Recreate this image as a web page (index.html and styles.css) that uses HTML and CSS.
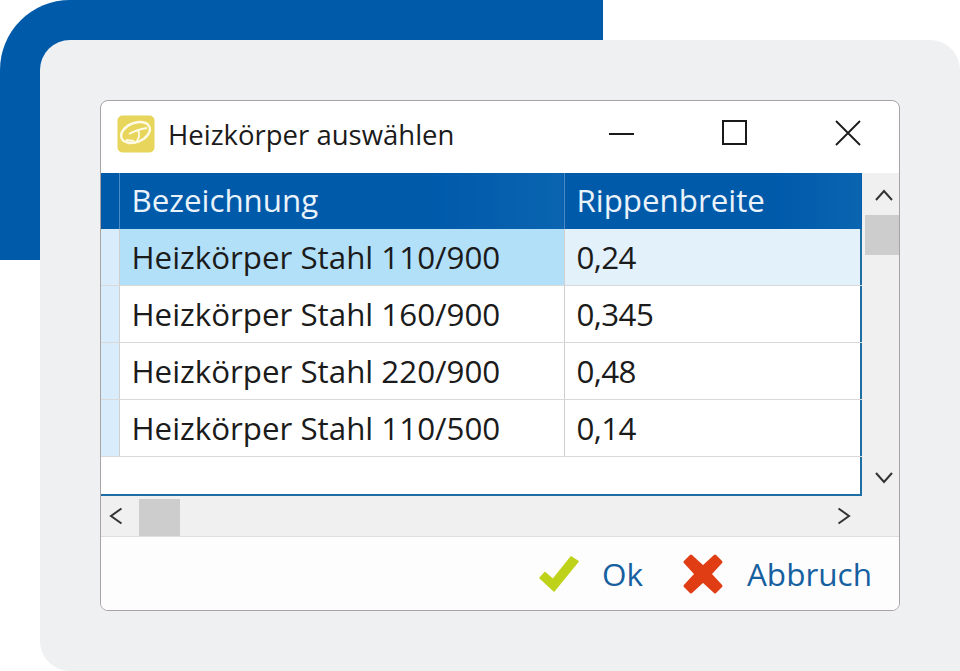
FILE: index.html
```html
<!DOCTYPE html>
<html lang="de">
<head>
<meta charset="utf-8">
<title>Heizkörper auswählen</title>
<link rel="stylesheet" href="styles.css">
</head>
<body>
<div class="stage">
  <div class="accent"></div>
  <div class="panel">
    <div class="window">
      <header class="titlebar">
        <svg class="app-icon" viewBox="0 0 38 38" width="38" height="38">
          <rect x="0.5" y="0.5" width="37" height="37" rx="5" fill="#e8d65c"/>
          <ellipse cx="18.500" cy="17.500" rx="15" ry="9.500" transform="rotate(-22 18.500 17.500)" fill="none" stroke="#fffbe6" stroke-width="2.400"/>
          <path d="M12 19c5-3 12-5 18-6M21 15c2 4 1 9-3 13M9 25l8 1" fill="none" stroke="#fffbe6" stroke-width="1.800"/>
        </svg>
        <span class="title">Heizkörper auswählen</span>
        <div class="controls">
          <svg class="ctl" viewBox="0 0 26 26" width="26" height="26"><path d="M0 14H25" stroke="#1a1a1a" stroke-width="2" fill="none"/></svg>
          <svg class="ctl" viewBox="0 0 26 26" width="26" height="26"><rect x="1" y="1" width="23" height="23" stroke="#1a1a1a" stroke-width="2" fill="none"/></svg>
          <svg class="ctl" viewBox="0 0 26 26" width="26" height="26"><path d="M1 1L25 25M25 1L1 25" stroke="#1a1a1a" stroke-width="1.800" fill="none"/></svg>
        </div>
      </header>
      <div class="grid-area">
        <div class="table-box">
          <table class="table">
            <colgroup><col class="c0"><col class="c1"><col class="c2"></colgroup>
            <thead>
              <tr><th></th><th>Bezeichnung</th><th>Rippenbreite</th></tr>
            </thead>
            <tbody>
              <tr class="selected"><td class="rh"></td><td class="name">Heizkörper Stahl 110/900</td><td class="val">0,24</td></tr>
              <tr><td class="rh"></td><td class="name">Heizkörper Stahl 160/900</td><td class="val">0,345</td></tr>
              <tr><td class="rh"></td><td class="name">Heizkörper Stahl 220/900</td><td class="val">0,48</td></tr>
              <tr><td class="rh"></td><td class="name">Heizkörper Stahl 110/500</td><td class="val">0,14</td></tr>
            </tbody>
          </table>
        </div>
        <div class="vscroll">
          <svg class="arrow up" viewBox="0 0 18 12" width="18" height="12"><path d="M1 11L9 2l8 9" fill="none" stroke="#333" stroke-width="2"/></svg>
          <div class="vthumb"></div>
          <svg class="arrow down" viewBox="0 0 18 12" width="18" height="12"><path d="M1 1l8 9 8-9" fill="none" stroke="#333" stroke-width="2"/></svg>
        </div>
        <div class="hscroll">
          <svg class="arrow left" viewBox="0 0 14 18" width="14" height="18"><path d="M12.500 1.500L2 9l10.500 7.500" fill="none" stroke="#333" stroke-width="2"/></svg>
          <div class="hthumb"></div>
          <svg class="arrow right" viewBox="0 0 14 18" width="14" height="18"><path d="M1.500 1.500L12 9 1.500 16.500" fill="none" stroke="#333" stroke-width="2"/></svg>
        </div>
      </div>
      <footer class="footer">
        <button class="btn" type="button">
          <svg viewBox="0 0 40 36" width="40" height="36"><path d="M1 22L6 16.500l8 7L32 1l7 4.500L15 35z" fill="#bfd21a" stroke="#bfd21a" stroke-linejoin="round" stroke-width="1.500"/></svg>
          <span>Ok</span>
        </button>
        <button class="btn" type="button">
          <svg viewBox="0 0 42 42" width="42" height="42"><path d="M9 3l12 11L33 3l6 6-11 12 11 12-6 6-12-11L9 39l-6-6 11-12L3 9z" fill="#e03d14" stroke="#e03d14" stroke-linejoin="round" stroke-width="3"/></svg>
          <span>Abbruch</span>
        </button>
      </footer>
    </div>
  </div>
</div>
</body>
</html>
```

FILE: styles.css
```css
* { box-sizing: border-box; }
html, body { margin: 0; padding: 0; }
body { background: #fff; font-family: "Open Sans", "Noto Sans", sans-serif; overflow: hidden; }

.stage { position: relative; width: 960px; height: 671px; padding: 40px 0 0 40px; }
.accent { position: absolute; left: 0; top: 0; width: 603px; height: 260px; background: #005aaa; border-top-left-radius: 70px; }
.panel { position: relative; width: 920px; height: 631px; background: #eff0f2; border-radius: 30px 30px 0 30px; padding: 60px 60px 0; }

.window { width: 800px; height: 511px; background: #fff; border: 1px solid #a9a3a5; border-radius: 8px; overflow: hidden; display: flex; flex-direction: column; }

.titlebar { height: 72px; flex: none; display: flex; align-items: center; padding: 0 38px 0 16px; }
.app-icon { flex: none; margin-right: 13px; margin-top: -6px; }
.title { font-size: 27.500px; color: #1b1b1b; line-height: 1; margin-top: -5px; flex: 1; }
.controls { display: flex; align-items: center; gap: 87px; margin-top: -8px; }
.ctl { display: block; }

.grid-area { flex: none; display: grid; grid-template-columns: 761px 38px; grid-template-rows: 323px 41px; }
.table-box { background: linear-gradient(#1c6ea4, #1c6ea4) right top / 2px 100% no-repeat, #fff; border-bottom: 2px solid #1c6ea4; overflow: hidden; }
.table { border-collapse: collapse; table-layout: fixed; width: 761px; font-size: 31.300px; color: #1b1b1b; }
.c0 { width: 18px; }
.c1 { width: 445px; }
.table th { height: 56px; background: linear-gradient(90deg, #005aaa 70%, #0a64b0); color: #eaf2fa; font-weight: 400; text-align: left; padding: 0 12px 3px; border-left: 1px solid #4c8cc6; white-space: nowrap; }
.table th:first-child { border-left: 0; padding: 0; background: #005aaa; }
.table td { height: 57px; padding: 0 12px; border-left: 1px solid #cfcfcf; border-bottom: 1px solid #d9d9d9; white-space: nowrap; }
.table td.rh { padding: 0; border-left: 0; background: #d9ecfb; }
.table td.val { letter-spacing: -0.6px; box-shadow: inset -2px 0 #1c6ea4; }
.table .selected td { height: 56px; padding-top: 1px; }
.selected .name { background: #b3e0f9; }
.selected .val { background: #e3f1fb; }

.vscroll { background: #f0f0f0; grid-row: 1; grid-column: 2; display: flex; flex-direction: column; align-items: center; padding-left: 3px; }
.vthumb { width: 100%; height: 40px; background: #cdcdcd; margin-top: 14px; }
.arrow { display: block; flex: none; }
.arrow.up { margin-top: 16px; margin-left: 2px; }
.arrow.down { margin-top: auto; margin-bottom: 12px; margin-left: 2px; }

.hscroll { grid-column: 1 / span 2; background: #f0f0f0; border-bottom: 1px solid #dedede; display: flex; align-items: center; padding: 0 49px 0 8px; }
.hthumb { width: 41px; height: 37px; background: #cdcdcd; margin-left: 16px; margin-top: 3px; }
.arrow.right { margin-left: auto; }

.footer { flex: 1; display: flex; align-items: center; justify-content: flex-end; gap: 39px; padding: 0 27px 0 0; background: #fdfdfe; }
.btn { display: flex; align-items: center; gap: 23px; padding: 0; border: 0; background: none; font: inherit; font-size: 31.500px; color: #17609f; line-height: 1; }
```
